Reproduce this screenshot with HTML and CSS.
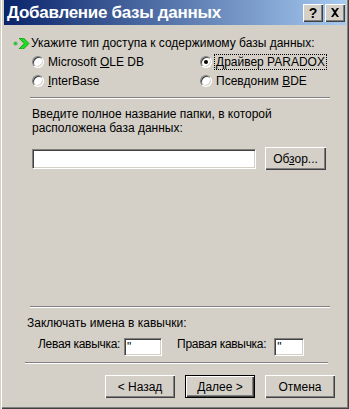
FILE: index.html
```html
<!DOCTYPE html>
<html lang="ru">
<head>
    <meta charset="UTF-8">
    <title>Добавление базы данных</title>
    <link rel="stylesheet" href="styles.css">
</head>
<body>
    <div class="window">
        <header class="titlebar">
            <h1>Добавление базы данных</h1>
            <div class="title-buttons">
                <button class="title-btn help-btn">?</button>
                <button class="title-btn close-btn">
                    <svg width="10" height="9" viewBox="0 0 10 9">
                        <path d="M1 0h2l2 2.5L7 0h2L6 4.5 9 9H7L5 6.5 3 9H1l3-4.5z" fill="#000"/>
                    </svg>
                </button>
            </div>
        </header>
        <main class="dialog-body">
            <div class="step-heading">
                <svg class="step-arrow" width="17" height="11" viewBox="0 0 17 11">
                    <circle cx="2.5" cy="5.5" r="1.8" fill="#22cc22" stroke="#7fae7f" stroke-width="0.6"/>
                    <polygon points="6,0 10.5,0 16,5.5 10.5,11 6,11 11.2,5.5" fill="#1ee01e" stroke="#0a8a0a" stroke-width="0.8"/>
                </svg>
                <span>Укажите тип доступа к содержимому базы данных:</span>
            </div>
            <div class="radio-grid">
                <label class="radio-item"><span class="radio"></span><span>Microsoft <u>O</u>LE DB</span></label>
                <label class="radio-item"><span class="radio checked"></span><span class="focused">Драйвер PARADOX</span></label>
                <label class="radio-item"><span class="radio"></span><span><u>I</u>nterBase</span></label>
                <label class="radio-item"><span class="radio"></span><span>Псевдоним <u>B</u>DE</span></label>
            </div>
            <hr class="separator">
            <p class="hint">Введите полное название папки, в которой<br>расположена база данных:</p>
            <div class="path-row">
                <input class="field path-field" type="text">
                <button class="btn browse-btn">Об<u>з</u>ор...</button>
            </div>
            <div class="spacer"></div>
            <hr class="separator">
            <p class="quotes-title">Заключать имена в кавычки:</p>
            <div class="quotes-row">
                <span class="quote-label">Левая кавычка:</span>
                <input class="field quote-field left-quote" type="text" value="&quot;">
                <span class="quote-label right-label">Правая кавычка:</span>
                <input class="field quote-field right-quote" type="text" value="&quot;">
            </div>
            <hr class="separator bottom-separator">
            <div class="button-row">
                <button class="btn">&lt; Назад</button>
                <button class="btn default-btn">Далее &gt;</button>
                <button class="btn">Отмена</button>
            </div>
        </main>
    </div>
</body>
</html>
```

FILE: styles.css
```css
* {
    box-sizing: border-box;
}
body {
    margin: 0;
    font-family: "Liberation Sans", Arial, sans-serif;
    font-size: 12px;
    color: #000;
}
.window {
    width: 349px;
    height: 409px;
    display: flex;
    flex-direction: column;
    background-color: #d4d0c8;
    padding: 0 3px 3px 4px;
    box-shadow: inset 1px 0 #d4d0c8, inset 2px 0 #fff,
        inset -1px -1px #404040, inset -2px -2px #808080;
}
.titlebar {
    height: 25px;
    display: flex;
    align-items: center;
    justify-content: space-between;
    padding: 0 1px 0 3px;
    background: linear-gradient(to right, #0a246a, #a6caf0);
}
.titlebar h1 {
    margin: 0;
    color: #fff;
    font-size: 17px;
    font-weight: bold;
    letter-spacing: -0.3px;
}
.title-buttons {
    display: flex;
    gap: 2px;
}
.title-btn {
    width: 20px;
    height: 18px;
    padding: 0;
    display: flex;
    align-items: center;
    justify-content: center;
    background-color: #d4d0c8;
    border: none;
    box-shadow: inset 1px 1px #fff, inset -1px -1px #404040, inset -2px -2px #808080;
    font-family: "Liberation Sans", Arial, sans-serif;
    font-size: 14px;
    font-weight: bold;
    color: #000;
}
.dialog-body {
    flex: 1;
    display: flex;
    flex-direction: column;
    padding: 11px 0 8px 0;
}
.step-heading {
    display: flex;
    align-items: center;
    height: 14px;
    line-height: 14px;
    margin-left: 9px;
}
.step-arrow {
    margin-right: 1px;
}
.radio-grid {
    display: grid;
    grid-template-columns: 168px 1fr;
    row-gap: 3px;
    margin: 4px 0 0 28px;
}
.radio-item {
    display: flex;
    align-items: center;
    gap: 4px;
    height: 16px;
    line-height: 14px;
}
.radio {
    position: relative;
    width: 12px;
    height: 12px;
    border-radius: 50%;
    background-color: #fff;
    border: 1px solid;
    border-color: #808080 #fff #fff #808080;
    box-shadow: inset 1px 1px #404040, inset -1px -1px #d4d0c8;
}
.radio.checked::after {
    content: "";
    position: absolute;
    left: 3px;
    top: 3px;
    width: 4px;
    height: 4px;
    border-radius: 50%;
    background-color: #000;
}
.focused {
    outline: 1px dotted #000;
    padding: 0 1px;
    margin-left: -1px;
}
.separator {
    width: 300px;
    height: 2px;
    margin: 8px 0 0 26px;
    border: none;
    border-top: 1px solid #808080;
    border-bottom: 1px solid #fff;
}
.hint {
    margin: 8px 0 0 28px;
    line-height: 14px;
}
.path-row {
    display: flex;
    align-items: center;
    margin: 12px 0 0 28px;
}
.field {
    height: 20px;
    padding: 0 3px;
    border: 1px solid;
    border-color: #808080 #fff #fff #808080;
    box-shadow: inset 1px 1px #404040, inset -1px -1px #d4d0c8;
    background-color: #fff;
    font-family: "Liberation Sans", Arial, sans-serif;
    font-size: 12px;
    outline: none;
}
.path-field {
    width: 224px;
}
.btn {
    height: 23px;
    padding: 0;
    border: none;
    background-color: #d4d0c8;
    box-shadow: inset 1px 1px #fff, inset -1px -1px #404040, inset -2px -2px #808080;
    font-family: "Liberation Sans", Arial, sans-serif;
    font-size: 12px;
    color: #000;
}
.browse-btn {
    width: 61px;
    margin-left: 9px;
}
.spacer {
    flex: 1;
}
.quotes-title {
    margin: 8px 0 0 23px;
    line-height: 14px;
}
.quotes-row {
    display: flex;
    align-items: flex-start;
    margin: 7px 0 0 34px;
}
.quote-label {
    line-height: 14px;
    letter-spacing: -0.3px;
}
.right-label {
    margin-left: 15px;
}
.quote-field {
    height: 18px;
    margin: 1px 0 0 4px;
    padding: 0 2px;
}
.left-quote {
    width: 38px;
}
.right-quote {
    width: 30px;
    margin-left: 8px;
}
.bottom-separator {
    width: 303px;
    margin: 6px 0 0 21px;
}
.button-row {
    display: flex;
    gap: 10px;
    margin: 11px 0 0 101px;
}
.button-row .btn {
    width: 70px;
}
.default-btn {
    box-shadow: inset 0 0 0 1px #000, inset 2px 2px #fff, inset -2px -2px #404040, inset -3px -3px #808080;
}
```
